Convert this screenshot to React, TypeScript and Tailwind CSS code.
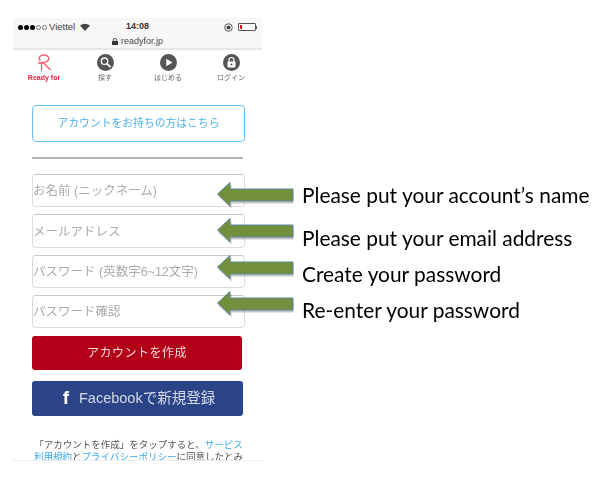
const jp = 'font-["Liberation_Sans","Noto_Sans_CJK_JP",sans-serif]';

const notes = [
  { text: 'Please put your account’s name', tip: 194, label: 195 },
  { text: 'Please put your email address', tip: 230, label: 238 },
  { text: 'Create your password', tip: 267, label: 274 },
  { text: 'Re-enter your password', tip: 303, label: 310 },
];

const fields = ['お名前 (ニックネーム)', 'メールアドレス', 'パスワード (英数字6~12文字)', 'パスワード確認'];

const Arrow = ({ tip }: { tip: number }) => (
  <svg
    className="absolute left-[214px] h-[30px] w-[84px] blur-[0.5px]"
    style={{ top: tip - 14 }}
    viewBox="0 0 84 30"
  >
    <path d="M4 15 L17 3 V10 H79 V22 H17 V27 Z" fill="#000" opacity="0.22" transform="translate(0.5 1.5)" />
    <path d="M3.5 14 L16 2.5 V9 H79 V21 H16 V26 Z" fill="#728f3c" stroke="#5f87a0" strokeWidth="1" />
  </svg>
);

const NavIcon = ({ children, label }: { children: React.ReactNode; label: string }) => (
  <div className="flex w-[62px] flex-col items-center">
    <svg className="h-[17px] w-[17px]" viewBox="0 0 17 17">
      <circle cx="8.5" cy="8.5" r="8.5" fill="#555" />
      {children}
    </svg>
    <span className="mt-[2px] text-[7px] leading-[10px] text-[#666]">{label}</span>
  </div>
);

export default function App() {
  return (
    <div className={`relative h-[490px] w-[610px] overflow-hidden bg-white ${jp}`}>
      <div className="ml-[13px] h-[443px] w-[249px] translate-y-[18px] overflow-hidden border-b border-[#eeeeee] blur-[0.45px]">
        {/* status bar */}
        <div className="h-[32px] border-b-2 border-[#e6e6e6] bg-[#f7f7f7] text-[#333]">
          <div className="flex h-[18px] items-center justify-between pl-[5px] pr-[5px]">
            <div className="flex w-[90px] items-center text-[9.5px]">
              <span className="flex gap-[1px]">
                {[0, 1, 2].map((i) => (
                  <span key={i} className="h-[5px] w-[5px] rounded-full bg-black" />
                ))}
                {[3, 4].map((i) => (
                  <span key={i} className="h-[5px] w-[5px] rounded-full border border-[#777]" />
                ))}
              </span>
              <span className="ml-[2px] text-[#444]">Viettel</span>
              <svg className="ml-[5px] h-[8px] w-[10px]" viewBox="0 0 10 8">
                <path d="M5 8 L0 2.5 Q5 -1.2 10 2.5 Z" fill="#444" />
              </svg>
            </div>
            <span className="text-[9px] font-bold">14:08</span>
            <div className="flex w-[90px] items-center justify-end gap-[5px]">
              <svg className="h-[9px] w-[9px]" viewBox="0 0 9 9">
                <circle cx="4.5" cy="4.5" r="3.8" fill="none" stroke="#444" strokeWidth="0.9" />
                <circle cx="4.5" cy="4.5" r="2" fill="#444" />
              </svg>
              <div className="flex items-center">
                <div className="h-[8px] w-[18px] rounded-[1px] border border-[#555] bg-white pl-[1px] pt-[1px]">
                  <div className="h-[4px] w-[2px] bg-[#e8161d]" />
                </div>
                <div className="h-[3px] w-[1px] bg-[#555]" />
              </div>
            </div>
          </div>
          <div className="flex items-center justify-center gap-[3px] text-[9px] leading-[11px] text-[#444]">
            <svg className="h-[7px] w-[6px]" viewBox="0 0 6 7">
              <path d="M1.4 3V2a1.6 1.6 0 013.2 0v1" fill="none" stroke="#333" strokeWidth="0.8" />
              <rect y="3" width="6" height="4" rx="0.5" fill="#333" />
            </svg>
            readyfor.jp
          </div>
        </div>

        {/* nav */}
        <nav className="flex h-[36px] items-start justify-between pl-[2px] pr-0 pt-[4px]">
          <div className="flex w-[58px] flex-col items-center">
            <svg className="h-[17px] w-[16px]" viewBox="0 0 16 17">
              <path
                d="M4 6.5 C1.5 3 5 1 8 1 C12 1 14 4 12 6.5 C10.5 8.3 7 9 2 9 H7 C10 9.5 11 14 14.5 15.5 M5.5 9 V16"
                fill="none"
                stroke="#f2606f"
                strokeWidth="1.3"
                strokeLinecap="round"
              />
            </svg>
            <span className="mt-[2px] text-[7px] font-bold leading-[10px] text-[#e8213f]">Ready for</span>
          </div>
          <NavIcon label="探す">
            <circle cx="7.5" cy="7.2" r="3.2" fill="none" stroke="#fff" strokeWidth="1.3" />
            <path d="M10 9.8 L13 12.6" stroke="#fff" strokeWidth="1.7" strokeLinecap="round" />
          </NavIcon>
          <NavIcon label="はじめる">
            <path d="M6.3 4.8 L12.5 8.5 L6.3 12.2 Z" fill="#fff" />
          </NavIcon>
          <NavIcon label="ログイン">
            <path d="M6 8V6a2.5 2.5 0 015 0v2" fill="none" stroke="#fff" strokeWidth="1.2" />
            <rect x="4.5" y="7.6" width="8" height="5.8" rx="0.8" fill="#fff" />
            <circle cx="8.5" cy="10.4" r="1" fill="#555" />
          </NavIcon>
        </nav>

        {/* form */}
        <div className="px-[19px] pt-[19px]">
          <button className="h-[37px] w-[213px] rounded-[4px] border border-[#65c1f5] bg-white text-[10.8px] text-[#4db1ea]">
            アカウントをお持ちの方はこちら
          </button>
          <div className="mt-[15px] h-[2px] w-[211px] bg-[#b4b4b4]" />
          <div className="mt-[15px] flex flex-col gap-[7px]">
            {fields.map((f) => (
              <div
                key={f}
                className="flex h-[33.3px] w-[213px] items-center rounded-[4px] border border-[#dcdcdc] border-t-[#c9c9c9] bg-white pt-[2px] text-[12.5px] text-[#ababab]"
              >
                {f}
              </div>
            ))}
          </div>
          <button className="mt-[8px] h-[34px] w-[210px] rounded-[3px] bg-[#b30019] text-[12px] tracking-[0.5px] text-[#f2d5d8]">
            アカウントを作成
          </button>
          <button className="mt-[11px] flex h-[35px] w-[211px] items-center rounded-[3px] bg-[#2b4488] pl-[26px] text-[14.5px] text-[#d5dae8]">
            <span className="-ml-[5px] w-[26px] text-[19px] font-bold text-white">f</span>
            Facebookで新規登録
          </button>
          <p className="mt-[23px] w-[213px] text-center text-[9.5px] leading-[12px] text-[#555]">
            「アカウントを作成」をタップすると、<span className="text-[#36a9ee]">サービス</span>
            <br />
            <span className="text-[#36a9ee]">利用規約</span>と<span className="text-[#36a9ee]">プライバシーポリシー</span>に同意したとみ
          </p>
        </div>
      </div>

      {/* slide annotations */}
      {notes.map((n) => (
        <div key={n.text}>
          <Arrow tip={n.tip} />
          <span
            className="absolute left-[302px] whitespace-nowrap font-['Lato',sans-serif] text-[20.9px] leading-[24px] text-black blur-[0.3px]"
            style={{ top: n.label - 12 }}
          >
            {n.text}
          </span>
        </div>
      ))}
    </div>
  );
}
